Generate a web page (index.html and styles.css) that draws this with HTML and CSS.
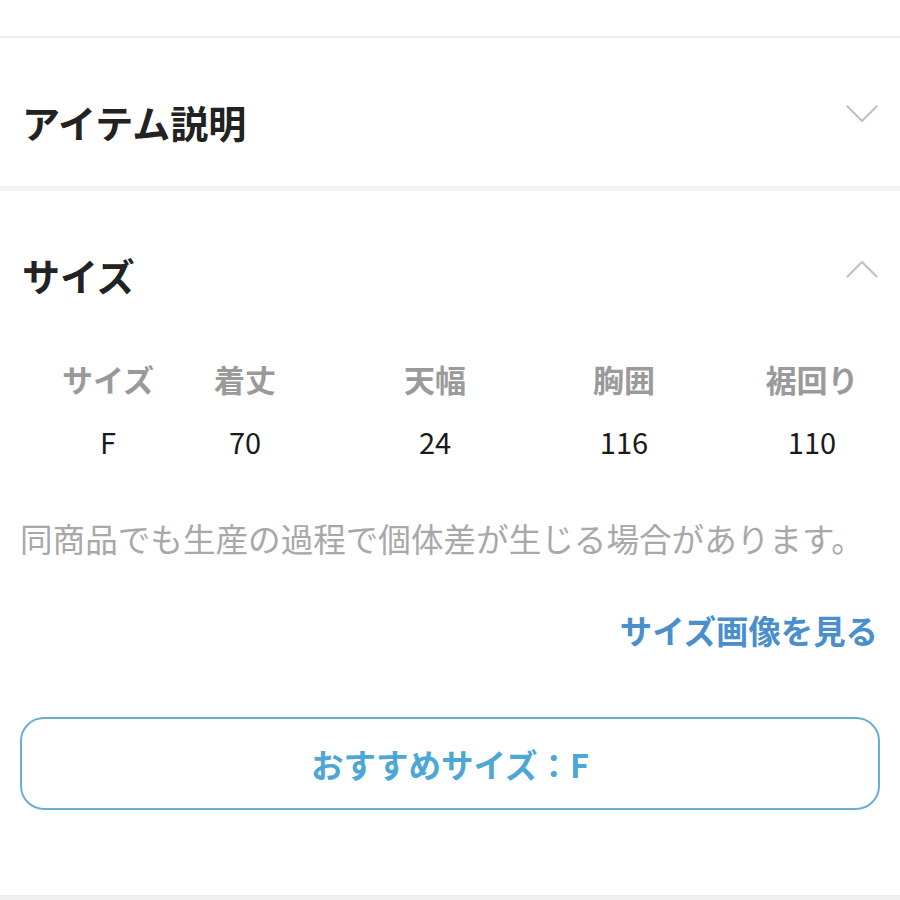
FILE: index.html
```html
<!DOCTYPE html>
<html lang="ja">
<head>
<meta charset="utf-8">
<link rel="stylesheet" href="styles.css">
</head>
<body>
<div class="top"></div>
<section class="acc acc-first">
  <div class="acc-head">
    <h2 class="acc-title">アイテム説明</h2>
    <svg class="chev" width="32" height="18" viewBox="0 0 32 18"><path d="M1.5 1.5 L16 16 L30.5 1.5" fill="none" stroke="#c4c4c4" stroke-width="2.4" stroke-linecap="round" stroke-linejoin="round"/></svg>
  </div>
</section>
<section class="acc acc-size">
  <div class="acc-head">
    <h2 class="acc-title">サイズ</h2>
    <svg class="chev" width="32" height="18" viewBox="0 0 32 18"><path d="M1.5 16.5 L16 2 L30.5 16.5" fill="none" stroke="#c4c4c4" stroke-width="2.4" stroke-linecap="round" stroke-linejoin="round"/></svg>
  </div>
  <div class="size-table">
    <div class="th">サイズ</div><div class="th">着丈</div><div class="th">天幅</div><div class="th">胸囲</div><div class="th">裾回り</div>
    <div class="td">F</div><div class="td">70</div><div class="td">24</div><div class="td">116</div><div class="td">110</div>
  </div>
  <p class="note">同商品でも生産の過程で個体差が生じる場合があります。</p>
  <div class="link-row"><a class="size-link">サイズ画像を見る</a></div>
  <div class="rec-btn">おすすめサイズ：F</div>
</section>
<div class="bottom"></div>
</body>
</html>
```
FILE: styles.css
```css
html, body {
  margin: 0;
  padding: 0;
  background: #ffffff;
  overflow: hidden;
  width: 900px;
  height: 900px;
}
body {
  font-family: "Noto Sans CJK JP", "Noto Sans", sans-serif;
  color: #222222;
}
.top {
  height: 36px;
  border-bottom: 2px solid #efefef;
}
.acc-head {
  display: flex;
  justify-content: space-between;
  align-items: flex-start;
  padding: 0 22px;
}
.acc-first .acc-head {
  padding-top: 66px;
  padding-bottom: 46px;
}
.acc-title {
  margin: 0;
  font-size: 38px;
  line-height: 36px;
  font-weight: 700;
  color: #222222;
}
.chev {
  display: block;
}
.acc-first .chev { margin-top: 1px; }
.acc-size {
  border-top: 5px solid #f3f3f3;
}
.acc-size .acc-head {
  padding-top: 66px;
}
.acc-size .chev { margin-top: 3px; }
.size-table {
  display: grid;
  grid-template-columns: 84px 190px 190px 188px 188px;
  margin: 68px 0 0 66px;
  row-gap: 26px;
  width: 840px;
}
.th, .td {
  text-align: center;
  line-height: 36px;
  height: 36px;
  white-space: nowrap;
  justify-self: center;
}
.th {
  font-size: 31px;
  font-weight: 700;
  color: #9a9a9a;
}
.td {
  font-size: 29px;
  font-weight: 400;
  color: #1a1a1a;
}
.note {
  margin: 63px 0 0 20px;
  font-size: 32.6px;
  line-height: 32px;
  color: #a8a8a8;
  white-space: nowrap;
}
.link-row {
  display: flex;
  justify-content: flex-end;
  padding: 0 22px;
  margin-top: 60px;
}
.size-link {
  font-size: 32.4px;
  line-height: 32px;
  font-weight: 700;
  color: #4a8fcb;
}
.rec-btn {
  margin: 71px 20px 0 20px;
  height: 89px;
  border: 2px solid #6aaed3;
  border-radius: 24px;
  display: flex;
  align-items: center;
  justify-content: center;
  font-size: 32.5px;
  font-weight: 700;
  color: #4ca7d7;
}
.bottom {
  margin-top: 85px;
  height: 5px;
  background: #efefef;
}
```
